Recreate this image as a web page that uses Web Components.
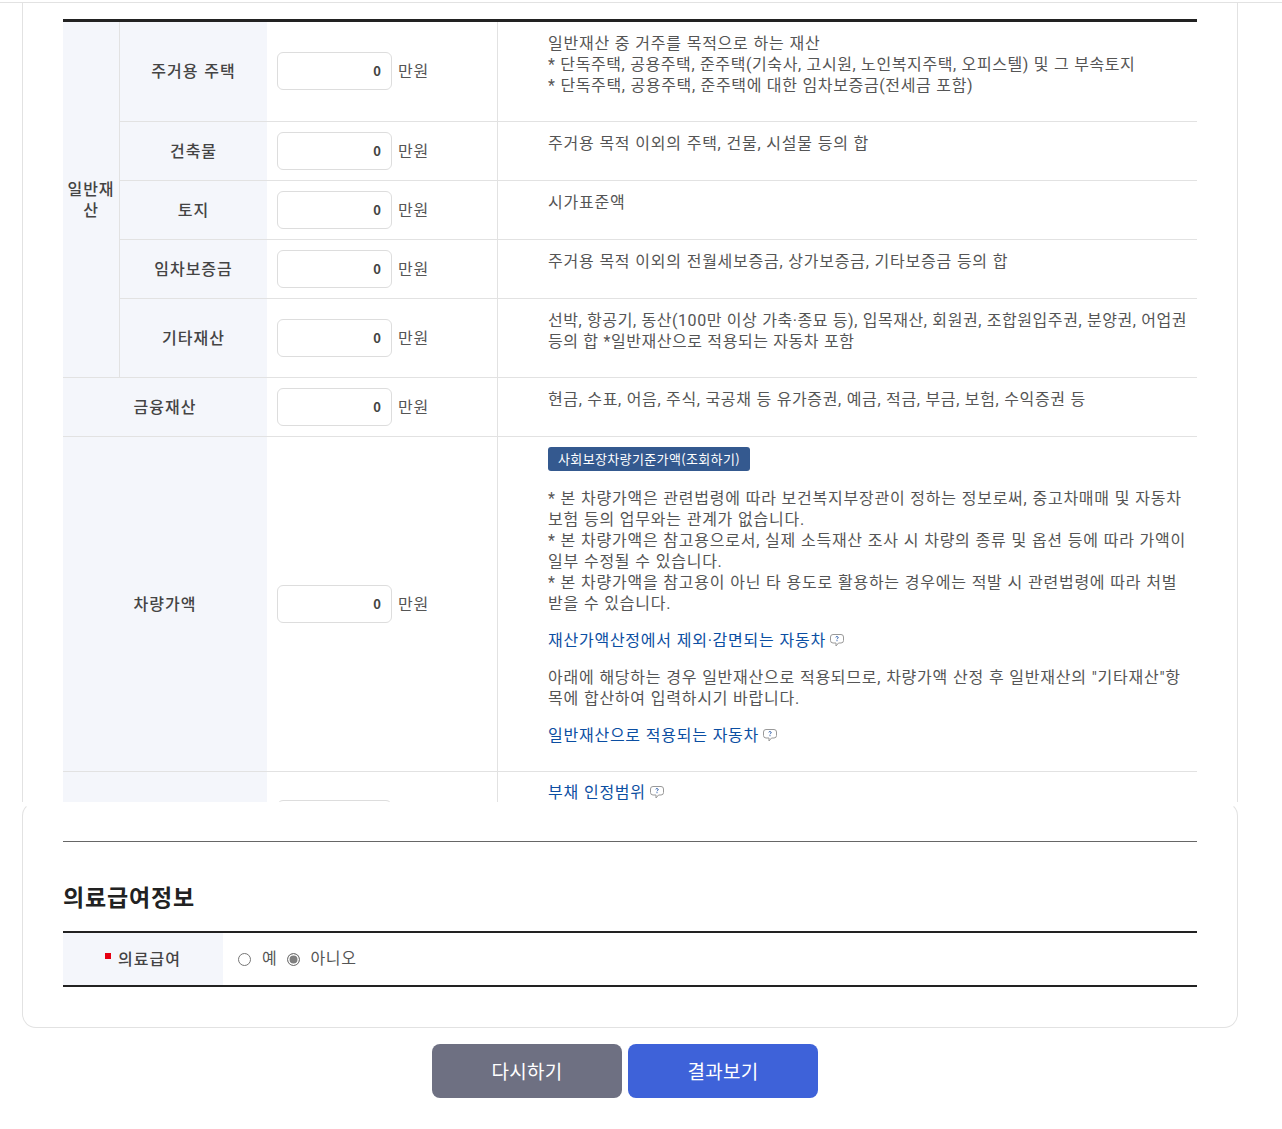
<!DOCTYPE html>
<html lang="ko">
<head>
<meta charset="utf-8">
<title>재산 입력</title>
<style>
  html, body { margin: 0; background: #fff; }
  body { font-family: "Noto Sans CJK KR", "Noto Sans", sans-serif; font-size: 16px; letter-spacing: .68px; word-spacing: .25px; color: #555; }
</style>
</head>
<body>
<asset-panel>
  <asset-table></asset-table>
</asset-panel>
<bottom-panel>
  <medical-info></medical-info>
</bottom-panel>
<form-actions></form-actions>

<script>
const FONT = `"Noto Sans CJK KR", "Noto Sans", sans-serif`;

class HelpIcon extends HTMLElement {
    constructor() {
        super();
        this.attachShadow({ mode: "open" });
        this.shadowRoot.innerHTML = `
            <style>
                :host { display: inline-block; width: 14px; height: 13px; vertical-align: -1px; margin-left: 4px; }
                svg { display: block; }
            </style>
            <svg width="14" height="13" viewBox="0 0 14 13" fill="none">
                <path d="M3 .5h8A2.500 2.500 0 0 1 13.500 3v3.500A2.500 2.500 0 0 1 11 9H8.500L6 12V9H3A2.500 2.500 0 0 1 .5 6.500V3A2.500 2.500 0 0 1 3 .5z" stroke="#999"/>
                <path d="M5.700 3.200c.2-.8 2.500-.9 2.500.4 0 .9-1.200 1-1.200 1.700" stroke="#2a5aa8"/>
                <path d="M7 6.200v1" stroke="#2a5aa8"/>
            </svg>
        `;
    }
}
customElements.define("help-icon", HelpIcon);

class MoneyInput extends HTMLElement {
    constructor() {
        super();
        this.attachShadow({ mode: "open" });
        this.shadowRoot.innerHTML = `
            <style>
                :host { display: flex; align-items: center; gap: 6px; }
                input {
                    box-sizing: border-box;
                    width: 115px;
                    height: 38px;
                    padding: 0 10px 2px;
                    border: 1px solid #ddd;
                    border-radius: 6px;
                    background: #fff;
                    color: #444;
                    font: bold 13px ${FONT};
                    text-align: right;
                    outline: none;
                }
                span { position: relative; top: -1px; }
            </style>
            <input type="text" value="0"><span><slot></slot></span>
        `;
    }
}
customElements.define("money-input", MoneyInput);

class AssetPanel extends HTMLElement {
    constructor() {
        super();
        this.attachShadow({ mode: "open" });
        this.shadowRoot.innerHTML = `
            <style>
                :host {
                    display: block;
                    box-sizing: border-box;
                    height: 800px;
                    overflow: hidden;
                    margin-top: 2px;
                    border-top: 1px solid #e2e2e2;
                }
                .side {
                    box-sizing: border-box;
                    height: 100%;
                    margin: 0 44px 0 22px;
                    padding: 16px 40px 0;
                    border: solid #e2e2e2;
                    border-width: 0 1px;
                }
            </style>
            <div class="side"><slot></slot></div>
        `;
    }
}
customElements.define("asset-panel", AssetPanel);

class AssetTable extends HTMLElement {
    constructor() {
        super();
        this.attachShadow({ mode: "open" });
        this.shadowRoot.innerHTML = `
            <style>
                :host { display: block; }
                table {
                    width: 1134px;
                    table-layout: fixed;
                    border-collapse: separate;
                    border-spacing: 0;
                    border-top: 3px solid #222;
                    line-height: 21px;
                }
                th, td { padding: 0; border-bottom: 1px solid #e2e2e2; }
                th {
                    padding-bottom: 2px;
                    background: #f4f6fb;
                    color: #444;
                    font-weight: 500;
                    letter-spacing: 1px;
                    text-align: center;
                }
                th.group { border-right: 1px solid #e2e2e2; }
                td.val { padding-left: 10px; border-right: 1px solid #e2e2e2; }
                td.desc {
                    vertical-align: top;
                    padding: 10.500px 8px 0 50px;
                    font-family: Roboto, "Noto Sans CJK KR", sans-serif;
                    letter-spacing: .75px;
                }
                td.desc.narrow { letter-spacing: .565px; }
                a { color: #0b4ea2; text-decoration: none; }
                p { margin: 0 0 14.500px; padding-top: 1.500px; }
                p.btn-row { margin-bottom: 16px; padding-top: 0; }
                p.lead { padding-top: .5px; }
                .tight { letter-spacing: .64px; }
                .tighter { letter-spacing: .6px; }
                .btn {
                    display: inline-block;
                    height: 24px;
                    padding: 0 10px;
                    border-radius: 3px;
                    background: #34598f;
                    color: #fff;
                    font: 13px/24px ${FONT};
                    letter-spacing: .36px;
                    vertical-align: top;
                }
                .first td.desc { padding-top: 10px; }
                .cut td.desc { padding-top: 12px; line-height: 17px; }
            </style>
            <table>
                <colgroup>
                    <col style="width:57px"><col style="width:147px"><col style="width:231px"><col>
                </colgroup>
                <tr style="height:100px">
                    <th class="group" rowspan="5">일반재산</th>
                    <th>주거용 주택</th>
                    <td class="val" style="padding-bottom:1px"><money-input>만원</money-input></td>
                    <td class="desc">일반재산 중 거주를 목적으로 하는 재산<br><span class="tighter">* 단독주택, 공용주택, 준주택(기숙사, 고시원, 노인복지주택, 오피스텔) 및 그 부속토지</span><br><span class="tight">* 단독주택, 공용주택, 준주택에 대한 임차보증금(전세금 포함)</span></td>
                </tr>
                <tr style="height:59px">
                    <th>건축물</th>
                    <td class="val"><money-input>만원</money-input></td>
                    <td class="desc">주거용 목적 이외의 주택, 건물, 시설물 등의 합</td>
                </tr>
                <tr style="height:59px">
                    <th>토지</th>
                    <td class="val"><money-input>만원</money-input></td>
                    <td class="desc">시가표준액</td>
                </tr>
                <tr style="height:59px">
                    <th>임차보증금</th>
                    <td class="val"><money-input>만원</money-input></td>
                    <td class="desc">주거용 목적 이외의 전월세보증금, 상가보증금, 기타보증금 등의 합</td>
                </tr>
                <tr style="height:79px">
                    <th>기타재산</th>
                    <td class="val"><money-input>만원</money-input></td>
                    <td class="desc narrow">선박, 항공기, 동산(100만 이상 가축·종묘 등), 입목재산, 회원권, 조합원입주권, 분양권, 어업권 등의 합 *일반재산으로 적용되는 자동차 포함</td>
                </tr>
                <tr style="height:59px">
                    <th colspan="2">금융재산</th>
                    <td class="val"><money-input>만원</money-input></td>
                    <td class="desc"><span class="tight">현금, 수표, 어음, 주식, 국공채 등 유가증권, 예금, 적금, 부금, 보험, 수익증권 등</span></td>
                </tr>
                <tr class="first" style="height:335px">
                    <th colspan="2">차량가액</th>
                    <td class="val"><money-input>만원</money-input></td>
                    <td class="desc">
                        <p class="btn-row"><a class="btn">사회보장차량기준가액(조회하기)</a></p>
                        <p class="lead">* 본 차량가액은 관련법령에 따라 보건복지부장관이 정하는 정보로써, 중고차매매 및 자동차 보험 등의 업무와는 관계가 없습니다.<br>
                        * 본 차량가액은 참고용으로서, 실제 소득재산 조사 시 차량의 종류 및 옵션 등에 따라 가액이 일부 수정될 수 있습니다.<br>
                        * 본 차량가액을 참고용이 아닌 타 용도로 활용하는 경우에는 적발 시 관련법령에 따라 처벌 받을 수 있습니다.</p>
                        <p><a>재산가액산정에서 제외·감면되는 자동차</a><help-icon></help-icon></p>
                        <p>아래에 해당하는 경우 일반재산으로 적용되므로, 차량가액 산정 후 일반재산의 "기타재산"항목에 합산하여 입력하시기 바랍니다.</p>
                        <p><a>일반재산으로 적용되는 자동차</a><help-icon></help-icon></p>
                    </td>
                </tr>
                <tr class="cut" style="height:94px">
                    <th colspan="2"></th>
                    <td class="val" style="vertical-align:top;padding-top:28px"><money-input></money-input></td>
                    <td class="desc"><a>부채 인정범위</a><help-icon></help-icon></td>
                </tr>
            </table>
        `;
    }
}
customElements.define("asset-table", AssetTable);

class BottomPanel extends HTMLElement {
    constructor() {
        super();
        this.attachShadow({ mode: "open" });
        this.shadowRoot.innerHTML = `
            <style>
                :host {
                    display: block;
                    box-sizing: border-box;
                    width: 1216px;
                    height: 226px;
                    margin: 0 0 0 22px;
                    padding: 38px 40px 0;
                    border: 1px solid #e2e2e2;
                    border-top-color: transparent;
                    border-radius: 14px;
                    background: #fff;
                }
            </style>
            <slot></slot>
        `;
    }
}
customElements.define("bottom-panel", BottomPanel);

class MedicalInfo extends HTMLElement {
    constructor() {
        super();
        this.attachShadow({ mode: "open" });
        this.shadowRoot.innerHTML = `
            <style>
                :host { display: block; border-top: 1px solid #666; }
                h2 {
                    margin: 0;
                    padding-top: 38px;
                    height: 51px;
                    color: #222;
                    font-size: 23px;
                    font-weight: 700;
                    letter-spacing: .85px;
                    line-height: 33px;
                }
                .row {
                    display: flex;
                    height: 52px;
                    border-top: 2px solid #222;
                    border-bottom: 2px solid #222;
                }
                .label {
                    display: flex;
                    align-items: center;
                    justify-content: center;
                    box-sizing: border-box;
                    width: 160px;
                    padding-bottom: 2px;
                    background: #f4f6fb;
                    color: #444;
                    font-weight: 500;
                    letter-spacing: 1px;
                }
                .label i { width: 6px; height: 6px; margin: -5px 7px 0 0; background: #e60012; }
                .opts { display: flex; align-items: center; padding-left: 15px; }
                .radio {
                    box-sizing: border-box;
                    width: 13px;
                    height: 13px;
                    border: 1px solid #767676;
                    border-radius: 50%;
                    background: #fff;
                }
                .radio.on { background: #808080; box-shadow: inset 0 0 0 1.500px #fff; }
                .opt { margin: -4px 10px 0 11px; }
                .radio.on + .opt { margin-left: 10px; }
            </style>
            <h2>의료급여정보</h2>
            <div class="row">
                <div class="label"><i></i>의료급여</div>
                <div class="opts">
                    <span class="radio"></span><span class="opt">예</span>
                    <span class="radio on"></span><span class="opt">아니오</span>
                </div>
            </div>
        `;
    }
}
customElements.define("medical-info", MedicalInfo);

class FormActions extends HTMLElement {
    constructor() {
        super();
        this.attachShadow({ mode: "open" });
        this.shadowRoot.innerHTML = `
            <style>
                :host { display: flex; gap: 6px; padding: 16px 0 31px 432px; }
                button {
                    width: 190px;
                    height: 54px;
                    padding: 0 0 2px;
                    border: 0;
                    border-radius: 8px;
                    color: #fff;
                    font: 19px ${FONT};
                    letter-spacing: .3px;
                }
                .reset { background: #6e7082; }
                .go { background: #3e62d9; }
            </style>
            <button class="reset">다시하기</button>
            <button class="go">결과보기</button>
        `;
    }
}
customElements.define("form-actions", FormActions);
</script>
</body>
</html>
